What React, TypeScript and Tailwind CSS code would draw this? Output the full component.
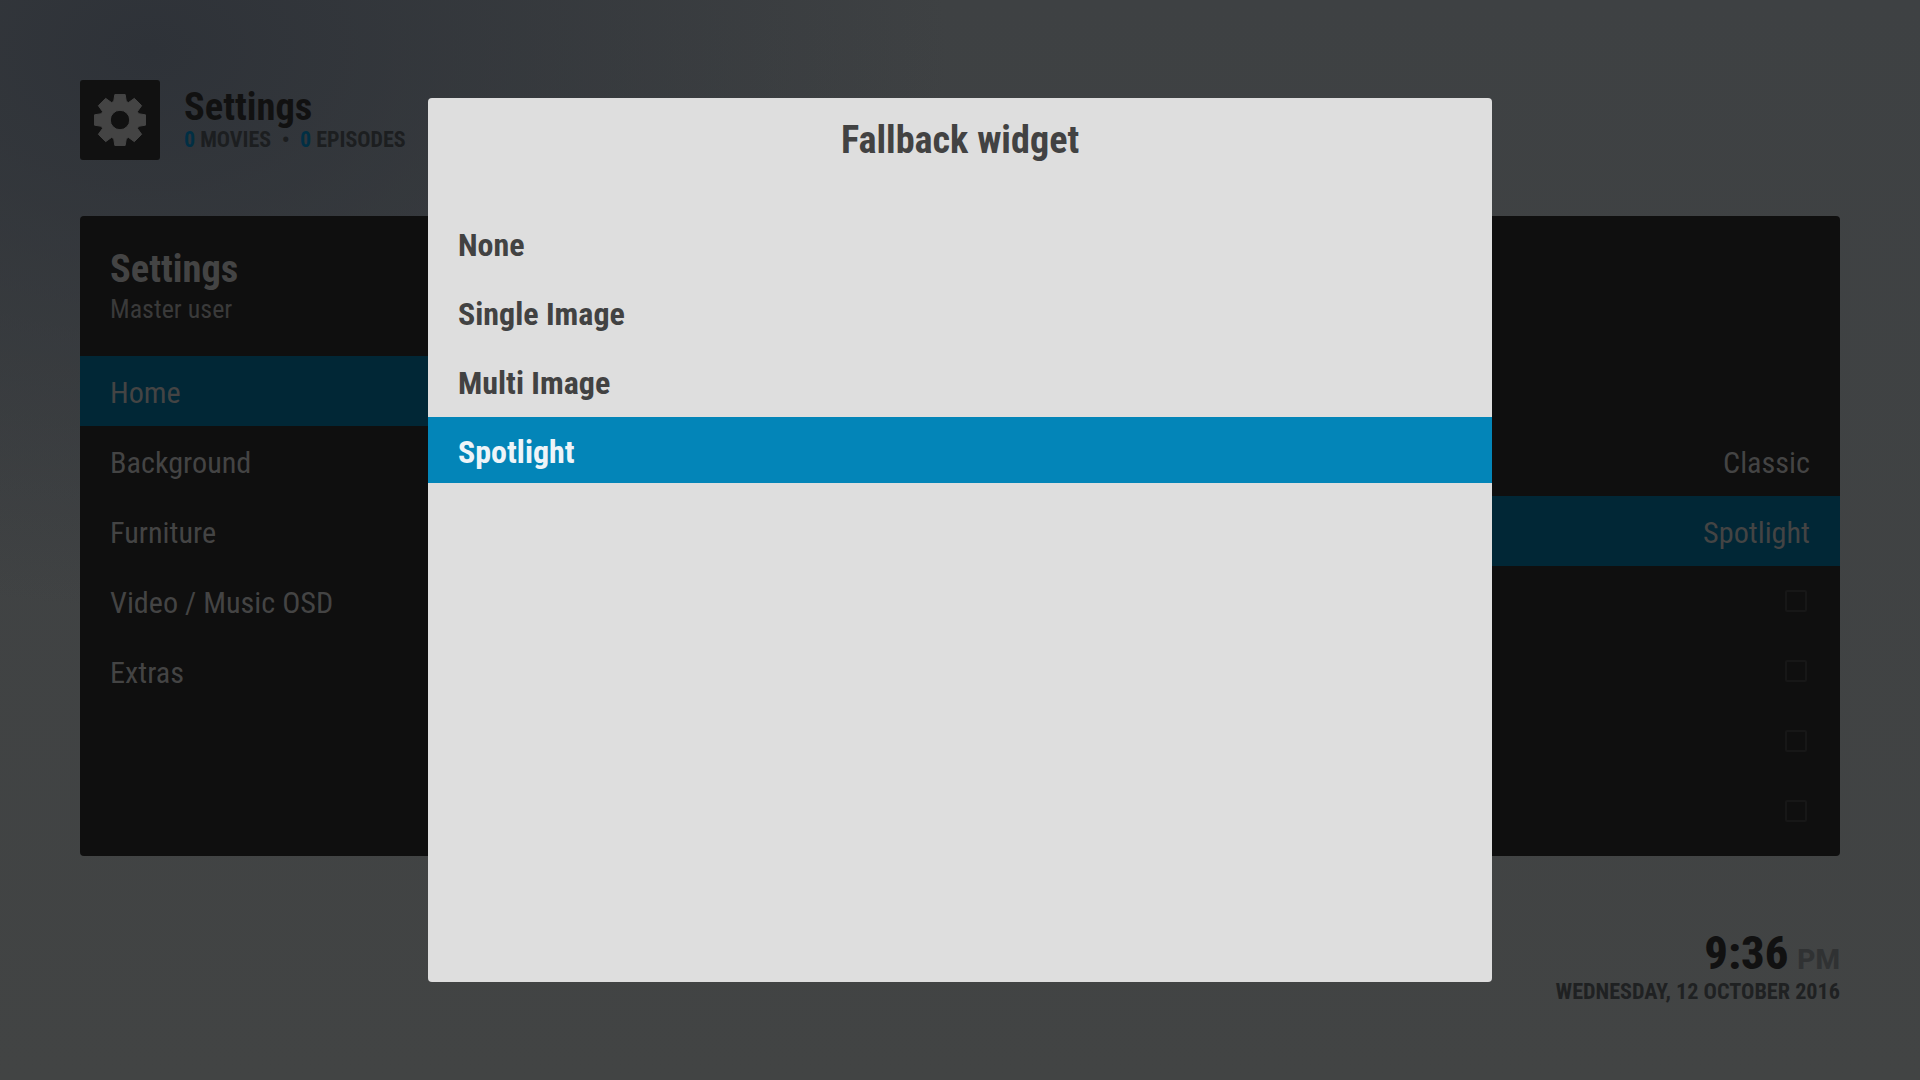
const MENU = ["Home", "Background", "Furniture", "Video / Music OSD", "Extras"];
const OPTIONS = ["None", "Single Image", "Multi Image", "Spotlight"];

// eight flat-topped teeth around a round hole
function gearPath() {
  const pts: string[] = [];
  for (let i = 0; i < 8; i++) {
    const a = (i * Math.PI) / 4 - Math.PI / 2;
    const spots: [number, number][] = [
      [19.5, -0.33],
      [26, -0.2],
      [26, 0.2],
      [19.5, 0.33],
    ];
    for (const [r, o] of spots) {
      pts.push(`${(30 + r * Math.cos(a + o)).toFixed(2)} ${(30 + r * Math.sin(a + o)).toFixed(2)}`);
    }
  }
  return `M${pts.join("L")}Z M30 20.3a9.7 9.7 0 1 0 0 19.4a9.7 9.7 0 1 0 0-19.4Z`;
}

function ValueRow({ selected, children }: { selected?: boolean; children: string }) {
  return (
    <div className={`flex h-[70px] items-center justify-end pt-[3px] pr-[30px] ${selected ? "bg-[#012736]" : ""}`}>
      {children}
    </div>
  );
}

function CheckRow() {
  return (
    <div className="flex h-[70px] items-center justify-end pr-[33px]">
      <div className="h-[22px] w-[22px] rounded-[2px] border-2 border-[#171717]" />
    </div>
  );
}

export default function App() {
  return (
    <div className="relative flex h-[1080px] w-[1920px] flex-col overflow-hidden bg-[radial-gradient(ellipse_800px_560px_at_150px_50px,#2e3238_0%,#2e323800_100%),linear-gradient(180deg,#3e4143_0%,#424444_100%)] px-[80px] pt-[80px] text-[#444] [font-family:Roboto,sans-serif] font-stretch-condensed">
      {/* header */}
      <div className="flex h-[80px] items-center gap-[24px]">
        <div className="flex h-[80px] w-[80px] items-center justify-center rounded-[3px] bg-[#111]">
          <svg viewBox="0 0 60 60" className="h-[60px] w-[60px]">
            <path d={gearPath()} fill="#444" fillRule="evenodd" stroke="#444" strokeWidth="1" strokeLinejoin="round" />
          </svg>
        </div>
        <div className="flex flex-col">
          <div className="text-[38.5px] leading-[38px] font-bold text-[#111]">Settings</div>
          <div className="mt-[2px] flex text-[22px] leading-[24px] font-bold text-[#1c1e20]">
            <span className="text-[#012f44]">0</span>
            <span className="ml-[5px]">MOVIES</span>
            <span className="mx-[10.5px]">•</span>
            <span className="text-[#012f44]">0</span>
            <span className="ml-[5px]">EPISODES</span>
          </div>
        </div>
      </div>

      {/* settings panel */}
      <div className="mt-[56px] flex h-[640px] overflow-hidden rounded-[4px] bg-[#0f0f0f]">
        <div className="w-[348px]">
          <div className="h-[140px] pt-[31px] pl-[30px]">
            <div className="text-[38.5px] leading-[44px] font-bold">Settings</div>
            <div className="mt-[2px] text-[26px] leading-[32px] text-[#3a3a3a]">Master user</div>
          </div>
          {MENU.map((m, i) => (
            <div
              key={m}
              className={`flex h-[70px] items-center pt-[3px] pl-[30px] text-[30.2px] ${i === 0 ? "bg-[#012736]" : ""}`}
            >
              {m}
            </div>
          ))}
        </div>
        <div className="flex-1 pt-[210px] text-[30.2px]">
          <ValueRow>Classic</ValueRow>
          <ValueRow selected>Spotlight</ValueRow>
          <CheckRow />
          <CheckRow />
          <CheckRow />
          <CheckRow />
        </div>
      </div>

      {/* clock */}
      <div className="mt-[80px] flex flex-col items-end">
        <div className="flex items-baseline gap-[9px] leading-[35px]">
          <span className="text-[46.5px] font-extrabold text-[#111] [font-stretch:87%]">9:36</span>
          <span className="text-[28px] font-extrabold text-[#303233] [font-stretch:100%]">PM</span>
        </div>
        <div className="text-[22.2px] leading-[28px] font-bold text-[#1f2122]">WEDNESDAY, 12 OCTOBER 2016</div>
      </div>

      {/* dialog */}
      <div className="absolute top-[98px] left-[428px] flex h-[884px] w-[1064px] flex-col overflow-hidden rounded-[4px] bg-[#dedede]">
        <div className="h-[112px] pt-[17px] text-center text-[38.2px] leading-[50px] font-bold text-[#424242]">
          Fallback widget
        </div>
        {OPTIONS.map((o) => (
          <div
            key={o}
            className={
              o === "Spotlight"
                ? "flex h-[66px] items-center bg-[#0385b8] pt-[4px] pl-[30px] text-[32px] font-bold text-[#eef4f8]"
                : "flex h-[69px] items-center pt-[1px] pl-[30px] text-[32px] font-bold text-[#424242]"
            }
          >
            {o}
          </div>
        ))}
      </div>
    </div>
  );
}
